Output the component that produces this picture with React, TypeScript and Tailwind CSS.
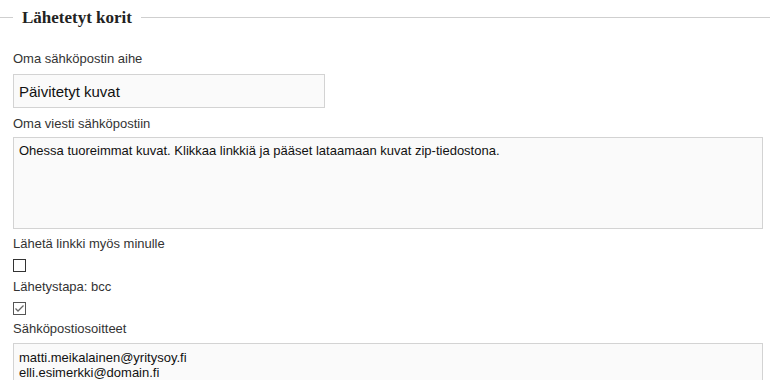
import React from "react";

export default function App() {
  return (
    <div
      className="relative w-[770px] h-[380px] overflow-hidden bg-white text-[#333]"
      style={{ fontFamily: '"Liberation Sans", Arial, sans-serif' }}
    >
      <div className="flex h-[35px] items-center">
        <div className="h-px w-[13px] bg-[#cfcfcf]" />
        <div
          className="px-[9px] text-[17px] font-bold leading-none text-[#222]"
          style={{ fontFamily: '"Liberation Serif", Georgia, serif' }}
        >
          Lähetetyt korit
        </div>
        <div className="h-px flex-1 bg-[#cfcfcf]" />
      </div>

      <div className="pl-[13px] pr-[7px]">
        <label className="mt-[16px] block text-[13px] leading-[15px]">Oma sähköpostin aihe</label>
        <input
          readOnly
          defaultValue="Päivitetyt kuvat"
          className="mt-[8px] block h-[34px] w-[312px] border border-[#d3d3d3] bg-[#fafafa] px-[5px] text-[15px] text-[#111] outline-none"
          style={{ fontFamily: '"Liberation Sans", Arial, sans-serif' }}
        />

        <label className="mt-[8px] block text-[13px] leading-[15px]">Oma viesti sähköpostiin</label>
        <textarea
          readOnly
          defaultValue="Ohessa tuoreimmat kuvat. Klikkaa linkkiä ja pääset lataamaan kuvat zip-tiedostona."
          className="mt-[6px] block h-[92px] w-full resize-none border border-[#d3d3d3] bg-[#fafafa] px-[5px] pt-[5px] text-[13px] leading-[15px] text-[#111] outline-none"
          style={{ fontFamily: '"Liberation Sans", Arial, sans-serif' }}
        />

        <label className="mt-[7px] block text-[13px] leading-[15px]">Lähetä linkki myös minulle</label>
        <div className="mt-[8px] h-[13px] w-[13px] border border-[#333] bg-white" />

        <label className="mt-[7px] block text-[13px] leading-[15px]">Lähetystapa: bcc</label>
        <div className="mt-[8px] flex h-[13px] w-[13px] items-center justify-center border border-[#555] bg-white">
          <svg width="11" height="11" viewBox="0 0 11 11">
            <path d="M1.5 5.5 L4 8 L9.5 2.5" fill="none" stroke="#666" strokeWidth="1.3" />
          </svg>
        </div>

        <label className="mt-[6px] block text-[13px] leading-[15px]">Sähköpostiosoitteet</label>
        <textarea
          readOnly
          defaultValue={"matti.meikalainen@yritysoy.fi\nelli.esimerkki@domain.fi"}
          className="mt-[7px] block h-[80px] w-full resize-none border border-[#d3d3d3] bg-[#fafafa] px-[5px] pt-[6px] text-[13px] leading-[15px] text-[#111] outline-none"
          style={{ fontFamily: '"Liberation Sans", Arial, sans-serif' }}
        />
      </div>
    </div>
  );
}
